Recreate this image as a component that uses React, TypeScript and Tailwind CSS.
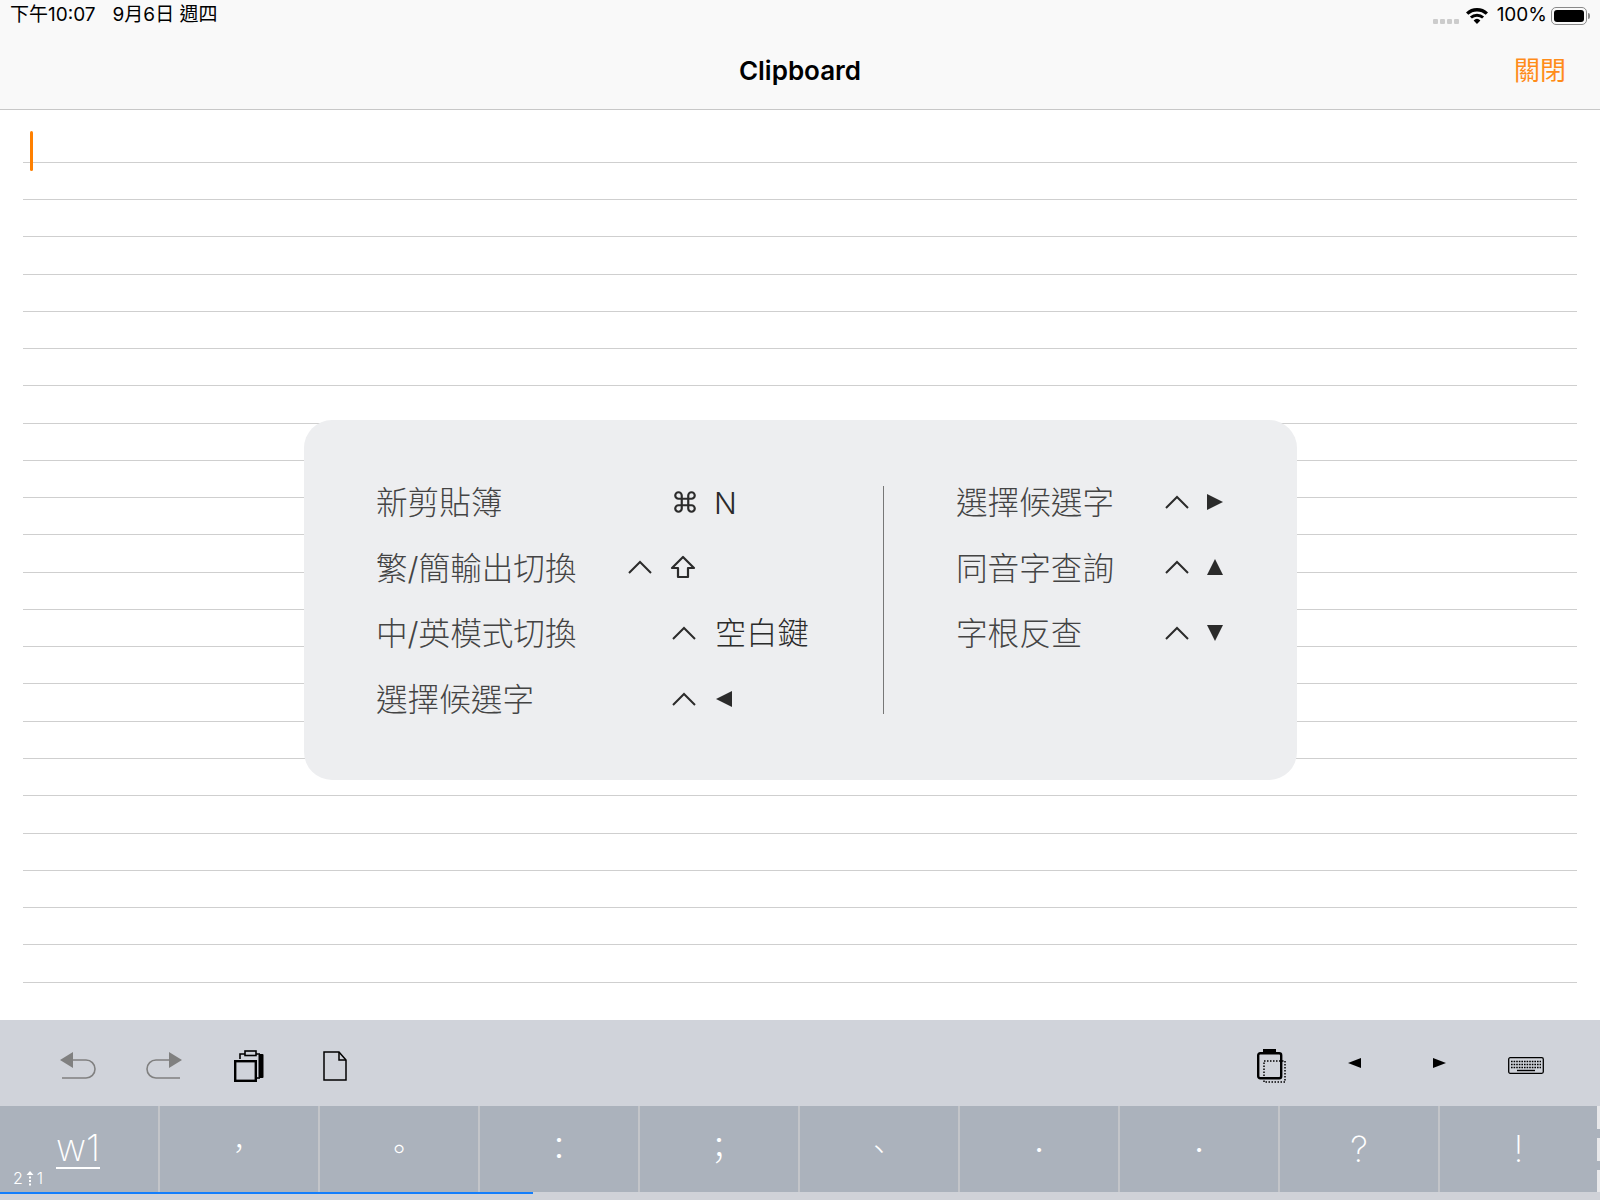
import { Command } from "lucide-react";

const cjk = "font-['Inter','Noto_Sans_CJK_TC',sans-serif]";

const Chevron = () => (
  <svg width="24" height="14" viewBox="0 0 24 14" fill="none" stroke="#2b2b2b" strokeWidth="2">
    <path d="M1 13 12 2l11 11" />
  </svg>
);

const ShiftKey = () => (
  <svg width="26" height="24" viewBox="0 0 26 24" fill="none" stroke="#2b2b2b" strokeWidth="2.2" strokeLinejoin="round" className="-ml-[2px]">
    <path d="M13 2 2 13h6v9h10v-9h6z" />
  </svg>
);

const Tri = ({ dir, size = 16 }: { dir: "l" | "r" | "u" | "d"; size?: number }) => {
  const pts = { l: "18,0 18,18 0,9", r: "0,0 0,18 18,9", u: "9,0 18,18 0,18", d: "0,0 18,0 9,18" }[dir];
  return (
    <svg width={size} height={size} viewBox="0 0 18 18" fill="#2b2b2b">
      <polygon points={pts} />
    </svg>
  );
};

const Label = ({ text }: { text: string }) => <span className="pt-[2px] text-[31.6px] font-light text-[#444444] leading-none">{text}</span>;
const KeyText = ({ text, size }: { text: string; size: string }) => <span className={`pt-[2px] ${size} font-light text-[#2b2b2b] leading-none`}>{text}</span>;

const leftRows = [
  { label: "新剪貼簿", a: null, b: <Command size={26} color="#2b2b2b" strokeWidth={2} />, c: <KeyText text="N" size="-ml-[2px] text-[30px]" /> },
  { label: "繁/簡輸出切換", a: <Chevron />, b: <ShiftKey />, c: null },
  { label: "中/英模式切換", a: null, b: <Chevron />, c: <KeyText text="空白鍵" size="-ml-px text-[31.2px]" /> },
  { label: "選擇候選字", a: null, b: <Chevron />, c: <Tri dir="l" /> },
];

const rightRows = [
  { label: "選擇候選字", dir: "r" as const },
  { label: "同音字查詢", dir: "u" as const },
  { label: "字根反查", dir: "d" as const },
];

const candidates = [
  { c: "，", size: "text-[28px] font-extralight" },
  { c: "。", size: "text-[30px] font-extralight" },
  { c: "：", size: "text-[32px] font-extralight" },
  { c: "；", size: "text-[32px] font-extralight" },
  { c: "、", size: "text-[30px] font-extralight" },
  { c: "·", size: "text-[30px] font-normal" },
  { c: "·", size: "text-[30px] font-normal" },
  { c: "?", size: "text-[36px] font-extralight" },
  { c: "!", size: "text-[36px] font-extralight" },
];

const HelpPanel = () => (
  <div className="absolute left-[304px] top-[310px] flex h-[360px] w-[993px] rounded-[28px] bg-[#edeef0] pl-[72px] pt-[49px]">
    <div className="grid h-[262px] w-[507px] grid-cols-[252px_44px_44px_auto] auto-rows-[65.6px] items-center">
      {leftRows.map((r) => (
        <div key={r.label} className="contents">
          <Label text={r.label} />
          <div>{r.a}</div>
          <div className="flex">{r.b}</div>
          <div className="flex">{r.c}</div>
        </div>
      ))}
    </div>
    <div className="mt-[17px] h-[228px] w-px bg-[#777777]" />
    <div className="ml-[72px] grid h-fit grid-cols-[209px_42px_auto] auto-rows-[65.6px] items-center">
      {rightRows.map((r) => (
        <div key={r.label} className="contents">
          <Label text={r.label} />
          <Chevron />
          <Tri dir={r.dir} />
        </div>
      ))}
    </div>
  </div>
);

const StatusRight = () => (
  <div className="flex items-center">
    <div className="mr-[7px] mt-[12px] flex gap-[2px]">
      {[0, 1, 2, 3].map((i) => (
        <div key={i} className="h-[5px] w-[5px] rounded-[1px] bg-[#cccccc]" />
      ))}
    </div>
    <svg width="22" height="16" viewBox="0 0 22 16" fill="#000000">
      <path d="M11 16 7.6 12.4a5 5 0 0 1 6.8 0zM5.9 10.6 3.9 8.5a10.5 10.5 0 0 1 14.2 0l-2 2.1a7.6 7.6 0 0 0-10.2 0zM2.3 6.8 0 4.5a16 16 0 0 1 22 0l-2.3 2.3a12.8 12.8 0 0 0-17.4 0z" />
    </svg>
    <span className="ml-[9px] text-[19px] text-black">100%</span>
    <div className="ml-[4px] flex h-[18px] w-[36px] items-center rounded-[5px] border border-[#8a8a8a] p-[2px]">
      <div className="h-full w-full rounded-[3px] bg-black" />
    </div>
    <div className="ml-px h-[6px] w-[2px] rounded-r-sm bg-[#8a8a8a]" />
  </div>
);

const UndoIcon = ({ flip }: { flip?: boolean }) => (
  <svg width="36" height="28" viewBox="0 0 36 28" fill="none" className={flip ? "-scale-x-100" : ""}>
    <polygon points="0,8 13,0 13,16" fill="#808080" />
    <path d="M12 8h14a9 9 0 0 1 0 18H2" stroke="#808080" strokeWidth="1.6" />
  </svg>
);

const CopyIcon = () => (
  <svg width="30" height="32" viewBox="0 0 30 32" fill="none" stroke="#000000">
    <rect x="1.2" y="11.2" width="20.6" height="19.6" strokeWidth="2.4" />
    <path d="M6 9V4h20" strokeWidth="1.6" />
    <rect x="24.5" y="4" width="5" height="24" rx="1" fill="#000000" stroke="none" />
    <path d="M22 28h4" strokeWidth="1.6" />
    <rect x="11" y="1" width="11" height="4.5" fill="#d0d3da" strokeWidth="1.6" />
  </svg>
);

const FileIcon = () => (
  <svg width="24" height="30" viewBox="0 0 24 30" fill="none" stroke="#000000" strokeWidth="1.5">
    <path d="M1 1h15l7 8v20H1z" />
    <path d="M16 1v8h7" />
  </svg>
);

const ClipIcon = () => (
  <svg width="29" height="34" viewBox="0 0 29 34" fill="none" stroke="#000000">
    <rect x="6" y="0" width="13" height="5" fill="#000000" stroke="none" />
    <rect x="1.2" y="4.2" width="23" height="25" rx="2" strokeWidth="2.4" />
    <rect x="7" y="12" width="21" height="21" strokeWidth="1.5" strokeDasharray="1.5 1.5" />
  </svg>
);

const SmallTri = ({ left }: { left?: boolean }) => (
  <svg width="13" height="10" viewBox="0 0 13 10" fill="#000000">
    <polygon points={left ? "13,0 13,10 0,5" : "0,0 0,10 13,5"} />
  </svg>
);

const KeyboardIcon = () => (
  <svg width="36" height="17" viewBox="0 0 36 17" fill="none" stroke="#000000">
    <rect x="0.7" y="0.7" width="34.6" height="15.6" rx="1.5" strokeWidth="1.3" />
    <path d="M3 4.5h30M3 7.5h30M3 10.5h30" strokeWidth="1.6" strokeDasharray="1.6 1" />
    <path d="M9 13.5h18" strokeWidth="1.4" />
  </svg>
);

const PageArrow = () => (
  <svg width="8" height="15" viewBox="0 0 8 15" fill="#ffffff" className="mx-[3px]">
    <polygon points="4,0 7.5,4 0.5,4" />
    <rect x="3" y="5.5" width="2" height="2" />
    <rect x="3" y="9" width="2" height="2" />
    <rect x="3" y="12.5" width="2" height="2" />
  </svg>
);

export default function App() {
  return (
    <div className={`flex h-[1200px] w-[1600px] flex-col overflow-hidden bg-white ${cjk}`}>
      <header className="flex h-[110px] flex-col border-b border-[#c8c8c8] bg-[#f9f9f9] px-[10px]">
        <div className="flex h-[30px] items-center justify-between pt-[1px] text-[19px] text-black">
          <div className="flex gap-[17px]">
            <span>下午10:07</span>
            <span>9月6日 週四</span>
          </div>
          <StatusRight />
        </div>
        <div className="relative flex h-[79px] items-center justify-center pt-[2px]">
          <span className="text-[26px] font-semibold text-black">Clipboard</span>
          <span className="absolute right-[24px] top-[21px] text-[26px] text-[#ff8c1a]">關閉</span>
        </div>
      </header>

      <main className="relative flex-1">
        <div className="absolute left-[30px] top-[21px] h-[40px] w-[3px] rounded-full bg-[#ff8000]" />
        <div className="ml-[23px] mr-[23px] flex flex-col pt-[15.5px]">
          {Array.from({ length: 23 }).map((_, i) => (
            <div key={i} className="h-[37.28px] border-b border-[#cfcfcf]" />
          ))}
        </div>
        <HelpPanel />
      </main>

      <div className="flex h-[86px] items-center justify-between bg-[#d0d3da] pl-[60px] pr-[56px] pt-[6px]">
        <div className="flex items-center">
          <UndoIcon />
          <div className="ml-[50px]"><UndoIcon flip /></div>
          <div className="ml-[52px]"><CopyIcon /></div>
          <div className="ml-[59px]"><FileIcon /></div>
        </div>
        <div className="flex items-center">
          <ClipIcon />
          <div className="ml-[62px] -mt-[6px]"><SmallTri left /></div>
          <div className="ml-[72px] -mt-[6px]"><SmallTri /></div>
          <div className="ml-[62px] -mt-[2px]"><KeyboardIcon /></div>
        </div>
      </div>

      <div className="flex h-[86px] bg-[#abb2bc] text-white">
        <div className="relative flex w-[160px] items-center justify-center border-r-2 border-[#c3c5c9]">
          <span className="ml-[-2px] border-b-2 border-white text-[37px] leading-[38px] font-extralight">w1</span>
          <div className="absolute bottom-[6px] left-[13px] flex items-center text-[16px] leading-none font-light">
            <span>2</span>
            <PageArrow />
            <span>1</span>
          </div>
        </div>
        {candidates.map((k, i) => (
          <div
            key={i}
            className={`flex items-center justify-center ${k.size} ${i < 8 ? "w-[160px] border-r-2 border-[#c3c5c9]" : "w-[157px]"}`}
          >
            {k.c}
          </div>
        ))}
        <div className="flex w-[3px] flex-col gap-[9px]">
          <div className="h-[23px] bg-[#e8e8ea]" />
          <div className="h-[23px] bg-[#e8e8ea]" />
          <div className="h-[22px] bg-[#e8e8ea]" />
        </div>
      </div>

      <div className="h-[8px] bg-[#d0d2d8]">
        <div className="h-[2px] w-[533px] bg-[#147efb]" />
      </div>
    </div>
  );
}
